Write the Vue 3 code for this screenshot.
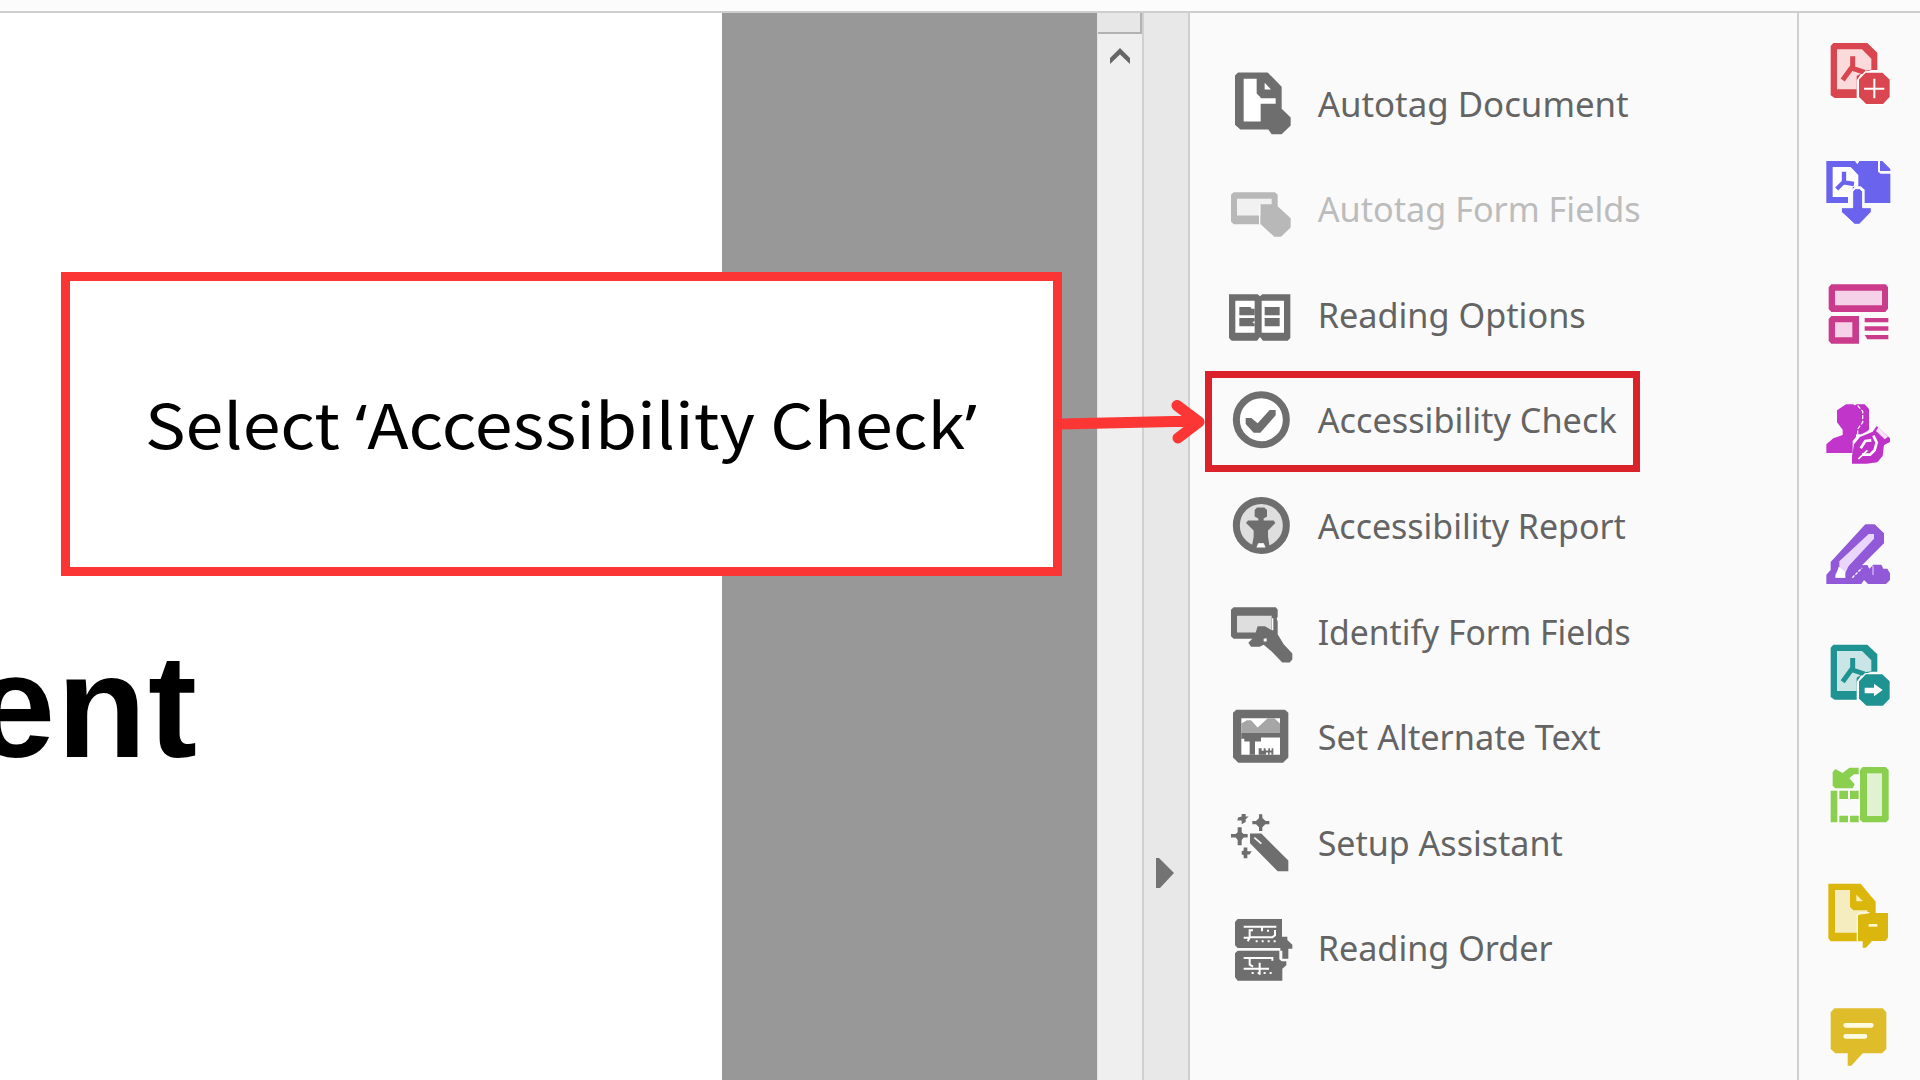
<script setup>
const tools = [
  {
    label: 'Autotag Document', length: 311, top: 93.6,
    art: `<path fill="#6e6e6e" d="M113 95H202L244 138V204L271 230V254L244 280H214L204 266H120L104 252V104Z"/><path fill="#fff" d="M130 114H169V158L181 170V242H130ZM193 126V146H212ZM181 172H226V189H181Z"/>`
  },
  {
    label: 'Autotag Form Fields', length: 323, top: 410.4, muted: true,
    art: `<path fill="#b8b8b8" d="M100 456H224L232 464V498L271 534V562L242 590H222L182 553V552H100L92 544V464Z"/><path fill="#f1f1f1" d="M110 476H214V492H180V526H110Z"/><path fill="none" stroke="#fafafa" stroke-width="4" d="M178 553V493"/>`
  },
  {
    label: 'Reading Options', length: 268, top: 727,
    art: `<path fill="#6e6e6e" d="M86 761H172L179 767L186 761H270V892L262 900H188L179 889L170 900H94L86 892Z"/><path fill="#fff" d="M105 780H163V876H105ZM184 780H251V876H184Z"/><path fill="#6e6e6e" d="M117 799H150L154 804H163V824H117ZM117 832H163V842L156 844L163 850V857H117ZM193 799H238V824H193ZM193 832H238V857H193ZM170 775H181V880H170Z"/>`
  },
  {
    label: 'Accessibility Check', length: 299, top: 114, marked: true,
    art: `<circle cx="183" cy="209" r="75" fill="#fff" stroke="#6e6e6e" stroke-width="21"/><path fill="#6e6e6e" d="M136 204H153L172 220L208 180H226V196L180 248H160L136 222Z"/>`
  },
  {
    label: 'Accessibility Report', length: 308, top: 430.8,
    art: `<circle cx="183" cy="525" r="75" fill="#dedede" stroke="#6e6e6e" stroke-width="21"/><path fill="#6e6e6e" d="M170 471H192L200 479V498L190 504V510H220L225 518L203 540V558L208 590H196L190 578H174L168 590H154L160 560V540L137 518L143 510H174V504L163 498V479Z"/><path fill="#fff" d="M168 591L176 580H188L196 591Z"/>`
  },
  {
    label: 'Identify Form Fields', length: 313, top: 747.6,
    art: `<path fill="#6e6e6e" d="M100 769H226L232 776V798L229 804L232 812V850L250 880L276 908V926L268 935H246L214 902L190 882L178 888H152L144 876L156 864H100L92 856V777Z"/><path fill="#dedede" d="M110 795H214V838L194 826H172L166 845H110Z"/><path stroke="#fafafa" stroke-width="4" d="M217 802V838"/><path fill="#fafafa" d="M190 864L199 862V872H190Z"/>`
  },
  {
    label: 'Set Alternate Text', length: 283, top: 104.4,
    art: `<path fill="#6e6e6e" d="M108 119H254L264 128V262L248 278H114L98 262V128Z"/><path fill="#fff" d="M123 144H239V254H123Z"/><path fill="#a6a6a6" d="M123 160L140 150H152L172 172L202 144H222L239 160V188H123Z"/><path fill="#6e6e6e" d="M123 188H239V202H182V214H164V254H148V214H132V206H123ZM175 234H184V242H190V234H196V241H204V234H209V241H214V234H219V254H213V247H208V254H203V247H197V254H175Z"/>`
  },
  {
    label: 'Setup Assistant', length: 245, top: 421.2,
    art: `<path fill="#6e6e6e" d="M124 430H136V438H145L136 446V454L124 461V450H111L113 441L124 438ZM176 431H186V442L196 451H207V461H195L186 470V481H176V470L167 461H156V451H167L176 442ZM112 470H124V485L130 490H142V501H130L124 508V524H112V508L106 501H92V490H106L112 485ZM130 531H141V542H154L148 552H141V563H130V554L124 551V542L130 540ZM149 489H183L264 570V602H232L149 518Z"/><path fill="none" stroke="#fafafa" stroke-width="5" d="M162 501L183 519"/>`
  },
  {
    label: 'Reading Order', length: 235, top: 738,
    art: `<path fill="#6e6e6e" d="M112 747H245V800H261V810L276 824V836H264V866H246V842H240V834H112L104 826V756ZM112 842H237V868L244 874H258V886L246 896V932H112L104 922V850Z"/><path fill="none" stroke="#fff" stroke-width="6" d="M130 770H228M185 770V784M158 781H148V802H216L224 796V780M130 803H148L142 814M130 864H216V872M148 864V884L158 890M130 896H206M178 878V914"/><path fill="none" stroke="#fff" stroke-width="6" stroke-dasharray="6 12" d="M166 814H228M154 909H220M200 782H218"/>`
  }
]

// Document outline with a folded corner, shared by the create and export tools.
const pdf = (main, tint, dy) => `<g transform="translate(0 ${dy})"><path fill="${main}" d="M130 127H232L262 156V208H244L214 218L200 240V292H134L122 284V136Z"/><path fill="${tint}" d="M141 146H216L244 174V207L226 210L200 226V266H141Z"/><path fill="none" stroke="${main}" stroke-width="15" d="M188 167V197L158 238M188 203L224 215"/><path fill="${main}" stroke="#fff" stroke-width="4" d="M226 214H278L301 236V290L280 312H228L205 290V236Z"/></g>`

const rail = [
  { name: 'Create PDF', top: 121, art: pdf('#d94650', '#fadadb', 0) + '<path stroke="#fff" stroke-width="6" d="M222 264H283M253 234V293"/>' },
  { name: 'Combine files', top: 482, art: `<path fill="#6a63ed" d="M109 481H194L202 492L209 481H264V514L272 520H301V608H224V568L212 558H196L186 568L174 590V608H109ZM270 481H276L301 506V512H270Z"/><path fill="#fff" d="M128 500H182L205 524V560H188V590H128Z"/><path fill="none" stroke="#6a63ed" stroke-width="13" d="M162 514V544L140 566M162 546L192 551"/><path fill="#6a63ed" stroke="#fff" stroke-width="3" d="M195 565H209L218 574V622H244V635L208 672H194L154 635V622H188V574Z"/>` },
  { name: 'Organize pages', top: 842, art: `<path fill="#cb3b8b" d="M124 849H287L294 857V922L286 932H124L116 923V858ZM124 944H207V1027H124L116 1018V953ZM224 950H295V963H224ZM224 975H295V988H224ZM224 1001H295V1014H232Z"/><path fill="#f5d2e8" d="M135 868H276V912H135ZM135 963H187V1008H135Z"/>` },
  { name: 'Request signatures', top: 123, art: `<path fill="#be32c8" d="M200 130H224L237 144V206L229 212L214 220L184 220V140Z"/><path fill="#c135ca" d="M168 130H190L212 148V185L198 206V228L188 240V276H109V250L130 232L158 222V206L141 184V148Z"/><path fill="none" stroke="#fafafa" stroke-width="4" stroke-dasharray="12 5" d="M203 134L218 151V184L203 204V230"/><path fill="#be32c8" d="M260 195L300 232V243L282 252L278 285L262 304L230 308H186V286L192 250L210 228L248 212Z"/><path fill="#fbe2fa" d="M265 198L294 227L284 235L258 210Z"/><path fill="none" stroke="#fff" stroke-width="8" d="M250 224L260 244L254 268L240 281H216M244 238L226 240L212 262"/><path stroke="#fff" stroke-width="5" d="M205 294L232 268"/>` },
  { name: 'Fill and sign', top: 484, art: `<path fill="#9158d8" d="M226 491H254L282 518V548L216 614L232 613L238 624L250 612H274L280 624H292L300 638V658L288 670H234L222 658L214 670H109V642L122 628V604Z"/><path fill="#e9d6fa" d="M236 520H252V534L176 616L164 640L166 651H136V642L148 620V602Z"/><path fill="#fff" d="M146 618L166 634V651H136Z"/><path stroke="#fff" stroke-width="4" stroke-dasharray="9 4" d="M187 651L216 622"/><path stroke="#c9a5ee" stroke-width="5" d="M249 616V643"/>` },
  { name: 'Export PDF', top: 845, art: pdf('#1f9292', '#c9e5e5', 726) + '<path fill="#fff" d="M224 982H252V970L278 989L252 1008V999H224Z"/>' },
  { name: 'Compare files', top: 125, art: `<path fill="#8acf4e" d="M218 140H287L296 149V298L288 306H218L210 298V149ZM122 211H142V306H122ZM148 211H174V236H148ZM180 211H206V236H180ZM148 286H174V306H148ZM180 286H206V306H180ZM128 156L136 146L158 158L178 142H206V162H192L178 174L194 192L188 204H136L128 196Z"/><path fill="#e1f2d2" d="M231 159H276V287H231Z"/>` },
  { name: 'Send for comments', top: 486, art: `<path fill="#dbb60c" d="M115 488H212L257 542V576H294V650L286 660H246L228 680H218V661H122L115 652Z"/><path fill="#f5edbf" d="M135 507H180V558L190 568H232V578L202 582V635H135Z"/><path fill="#fff0b5" d="M199 521V541H219Z"/><path fill="none" stroke="#fff8df" stroke-width="4" d="M202 661V582L212 575H238"/><path stroke="#fff8d0" stroke-width="8" d="M236 613H262"/>` },
  { name: 'Comment', top: 846, art: `<path fill="#dfbd2a" d="M134 862H278L289 874V984L276 997H218L184 1034H173V997H136L122 984V874Z"/><path stroke="#fffbe0" stroke-width="14" stroke-linecap="round" d="M167 913H244M167 946H225"/>` }
]
</script>

<template>
  <div class="app">
    <header class="topbar"></header>
    <div class="workspace">
      <main class="viewer">
        <section class="page"><h1>ent</h1></section>
      </main>
      <div class="scrollbar">
        <div class="splitter"></div>
        <svg class="up" viewBox="0 0 20 16"><path d="M0 10 10 0l10 10v6L10 6.500 0 16Z" fill="#666" /></svg>
      </div>
      <div class="collapse">
        <svg width="18" height="32" viewBox="0 0 18 32"><path d="M0 0h3l15 15-14 15H0Z" fill="#737373" /></svg>
      </div>
      <aside class="panel">
        <div v-for="t in tools" :key="t.label" class="tool" :class="{ muted: t.muted }">
          <svg class="icon" :viewBox="`80 ${t.top} 198 198`" v-html="t.art"></svg>
          <svg class="label" width="360" height="60">
            <text x="4.700" y="42" :textLength="t.length" lengthAdjust="spacingAndGlyphs">{{ t.label }}</text>
          </svg>
          <div v-if="t.marked" class="marker"></div>
        </div>
      </aside>
      <nav class="rail">
        <div v-for="r in rail" :key="r.name" class="rail-item">
          <svg class="icon" :viewBox="`105 ${r.top} 198 198`" v-html="r.art"></svg>
        </div>
      </nav>
    </div>
    <svg class="arrow" width="150" height="60" viewBox="0 0 150 60">
      <path d="M0 29 136 26M117 10.500 139 27 118 43" />
    </svg>
    <div class="callout">
      <svg width="900" height="140">
        <text x="7" y="95" textLength="832" lengthAdjust="spacingAndGlyphs">Select <tspan class="quote">‘</tspan>Accessibility Check<tspan class="quote">’</tspan></text>
      </svg>
    </div>
  </div>
</template>

<style>
body { margin: 0; overflow: hidden; }
</style>

<style scoped>
.app {
  position: relative;
  width: 1920px;
  height: 1080px;
  overflow: hidden;
  display: flex;
  flex-direction: column;
  background: #fafafa;
}
.topbar {
  flex: none;
  box-sizing: border-box;
  height: 13px;
  background: #fcfcfc;
  border-bottom: 2px solid #cecece;
}
.workspace { flex: 1; display: flex; min-height: 0; }
.viewer { width: 1097px; background: #989898; flex: none; }
.page {
  width: 722px;
  height: 100%;
  background: #fff;
  overflow: hidden;
  display: flex;
}
h1 {
  margin: 611px 0 0 -26.500px;
  font: bold 147px/164px "Liberation Sans", Arial, sans-serif;
  letter-spacing: 1.500px;
  color: #000;
}
.scrollbar {
  flex: none;
  box-sizing: border-box;
  width: 47px;
  background: #efefef;
  border-right: 2px solid #d0d0d0;
  border-left: 1px solid #e4e4e4;
}
.splitter {
  box-sizing: border-box;
  width: 44px;
  height: 21px;
  background: #e7e7e7;
  border-right: 2px solid #b2b2b2;
  border-bottom: 2px solid #b2b2b2;
}
.up { display: block; width: 20px; height: 16px; margin: 14px 0 0 12px; }
.collapse {
  flex: none;
  box-sizing: border-box;
  width: 46px;
  padding: 845px 0 0 12px;
  background: #e8e8e8;
  border-right: 2px solid #cfcfcf;
}
.collapse svg { display: block; }
.panel {
  flex: none;
  box-sizing: border-box;
  width: 607px;
  padding: 38.900px 0 0 36.700px;
}
.tool { position: relative; display: flex; align-items: center; height: 105.600px; }
.icon { width: 66px; height: 66px; flex: none; display: block; }
.label { margin: 0 0 0 20px; display: block; }
.label text {
  font-family: "Noto Sans", "Open Sans", sans-serif;
  font-size: 34.500px;
  fill: #646464;
}
.muted .label text { fill: #bcbcbc; }
.marker {
  position: absolute;
  box-sizing: border-box;
  left: -21.700px;
  top: 2.300px;
  width: 435px;
  height: 101px;
  border: 7px solid #db212a;
}
.rail {
  flex: 1;
  box-sizing: border-box;
  padding: 1.200px 0 0 26px;
  border-left: 2px solid #d0d0d0;
}
.rail-item { height: 120.200px; display: flex; align-items: center; }
.callout {
  position: absolute;
  box-sizing: border-box;
  left: 61px;
  top: 272px;
  width: 1000.500px;
  height: 304px;
  border: 9px solid #fb3434;
  background: #fff;
  display: flex;
  align-items: center;
  padding-left: 68px;
}
.callout text {
  font-family: "Noto Sans CJK SC", sans-serif;
  font-size: 62px;
  fill: #000;
}
.callout .quote { font-family: "Noto Sans", sans-serif; }
.arrow { position: absolute; left: 1060px; top: 395px; }
.arrow path {
  fill: none;
  stroke: #fc3535;
  stroke-width: 11px;
  stroke-linecap: round;
  stroke-linejoin: round;
}
</style>
